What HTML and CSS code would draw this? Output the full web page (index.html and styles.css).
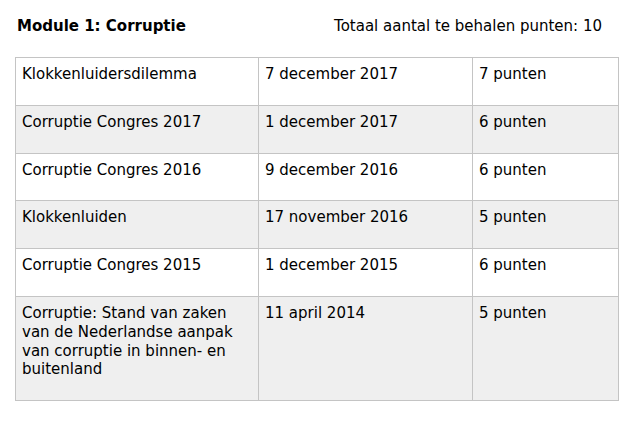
FILE: index.html
```html
<!DOCTYPE html>
<html lang="nl">
<head>
<meta charset="utf-8">
<title>Module 1: Corruptie</title>
<link rel="stylesheet" href="styles.css">
</head>
<body>
<div class="module">
  <div class="module-head">
    <h2 class="module-title">Module 1: Corruptie</h2>
    <div class="module-total">Totaal aantal te behalen punten: 10</div>
  </div>
  <table class="module-table">
    <colgroup>
      <col class="c1"><col class="c2"><col class="c3">
    </colgroup>
    <tbody>
      <tr><td>Klokkenluidersdilemma</td><td>7 december 2017</td><td>7 punten</td></tr>
      <tr><td>Corruptie Congres 2017</td><td>1 december 2017</td><td>6 punten</td></tr>
      <tr><td>Corruptie Congres 2016</td><td>9 december 2016</td><td>6 punten</td></tr>
      <tr><td>Klokkenluiden</td><td>17 november 2016</td><td>5 punten</td></tr>
      <tr><td>Corruptie Congres 2015</td><td>1 december 2015</td><td>6 punten</td></tr>
      <tr><td>Corruptie: Stand van zaken van de Nederlandse aanpak van corruptie in binnen- en buitenland</td><td>11 april 2014</td><td>5 punten</td></tr>
    </tbody>
  </table>
</div>
</body>
</html>
```
FILE: styles.css
```css
html, body {
  margin: 0;
  padding: 0;
  background: #fff;
}
body {
  font-family: "DejaVu Sans", Verdana, sans-serif;
  font-size: 15px;
  color: #000;
}
.module {
  padding: 16px 0 0 15px;
  width: 603px;
}
.module-head {
  display: flex;
  justify-content: space-between;
  align-items: center;
  padding: 0 16px 0 2px;
  height: 20px;
  margin-bottom: 21px;
}
.module-title {
  margin: 0;
  font-size: 15px;
  font-weight: bold;
}
.module-total {
  font-size: 15px;
}
.module-table {
  width: 603px;
  border-collapse: collapse;
  table-layout: fixed;
}
.c1 { width: 243px; }
.c2 { width: 214px; }
.c3 { width: 146px; }
.module-table td {
  border: 1px solid #c4c4c4;
  padding: 7px 6px 21px 6px;
  vertical-align: top;
  line-height: 18.8px;
}
.module-table tr:nth-child(even) td {
  background: #efefef;
}
```
